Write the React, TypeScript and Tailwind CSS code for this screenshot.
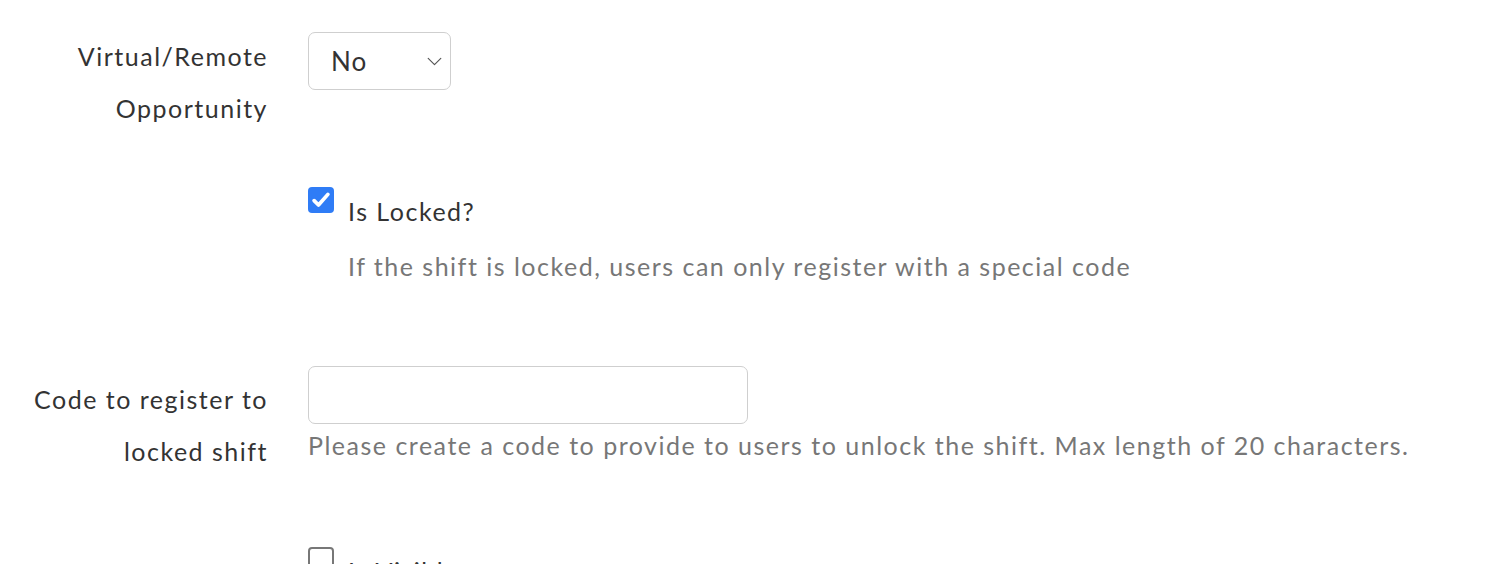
const font = { fontFamily: "Lato, 'Noto Sans', sans-serif" };

function Chevron() {
  return (
    <svg viewBox="0 0 16 10" className="h-[9px] w-[15px]" fill="none" stroke="#555" strokeWidth={1.3} strokeLinecap="round" strokeLinejoin="round">
      <path d="M1 1.5l7 7 7-7" />
    </svg>
  );
}

export default function App() {
  return (
    <div className="min-h-[564px] overflow-hidden bg-white text-[25px] tracking-[0.06em] text-[#333]" style={font}>
      <div className="flex flex-col pt-[32px]">
        {/* Virtual / Remote */}
        <div className="flex">
          <div className="w-[268px] text-right leading-[52px] -mt-[2px]">
            Virtual/Remote
            <br />
            Opportunity
          </div>
          <div className="ml-[40px]">
            <div className="flex h-[58px] w-[143px] items-center justify-between rounded-[7px] border border-[#cfcfcf] pl-[22px] pr-[8px] text-[#333]">
              <span className="text-[26px] tracking-[0.04em]">No</span>
              <Chevron />
            </div>
          </div>
        </div>

        {/* Is Locked */}
        <div className="ml-[308px] mt-[53px] flex gap-[14px]">
          <div className="flex h-[26px] w-[26px] shrink-0 items-center justify-center rounded-[4px] bg-[#2f7cf6]">
            <svg viewBox="0 0 16 16" className="h-[20px] w-[20px]" fill="none" stroke="white" strokeWidth={3} strokeLinecap="round" strokeLinejoin="round">
              <path d="M2.5 8.5l3.5 3.5 7.5-8.5" />
            </svg>
          </div>
          <div className="flex flex-col">
            <span className="mt-[8px] leading-[32px]">Is Locked?</span>
            <span className="mt-[23px] leading-[32px] text-[#777]">
              If the shift is locked, users can only register with a special code
            </span>
          </div>
        </div>

        {/* Code */}
        <div className="mt-[84px] flex">
          <div className="w-[268px] text-right leading-[52px] mt-[7px]">
            Code to register to
            <br />
            locked shift
          </div>
          <div className="ml-[40px] flex flex-col">
            <input
              type="text"
              className="h-[58px] w-[440px] rounded-[7px] border border-[#cfcfcf] px-[14px] outline-none"
            />
            <span className="mt-[5px] leading-[32px] text-[#777]">
              Please create a code to provide to users to unlock the shift. Max length of 20 characters.
            </span>
          </div>
        </div>

        {/* Is Visible */}
        <div className="ml-[308px] mt-[70px] flex gap-[14px]">
          <div className="h-[26px] w-[26px] shrink-0 rounded-[4px] border-2 border-[#777] bg-white" />
          <span className="mt-[8px] leading-[32px]">Is Visible</span>
        </div>
      </div>
    </div>
  );
}
